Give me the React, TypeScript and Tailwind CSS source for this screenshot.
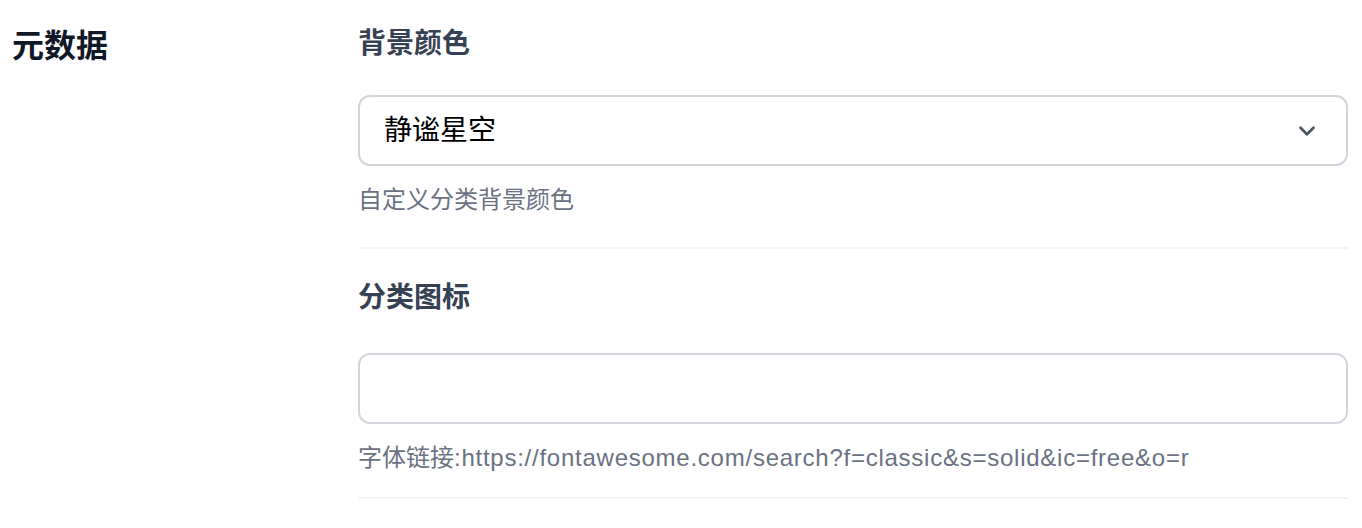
import { ChevronDown } from 'lucide-react';

const font = { fontFamily: '"Liberation Sans", "Noto Sans CJK SC", sans-serif' };

function Field({
  label,
  children,
  help,
  top,
  gap,
  bottom,
}: {
  label: string;
  children: React.ReactNode;
  help: React.ReactNode;
  top: string;
  gap: string;
  bottom: string;
}) {
  return (
    <div className={`flex flex-col ${top} border-b-2 border-gray-100`}>
      <div className="text-[28px] leading-[40px] font-semibold text-gray-700">{label}</div>
      <div className={gap}>{children}</div>
      <div className={`mt-[16px] ${bottom} text-[24px] leading-[36px] text-gray-500`}>{help}</div>
    </div>
  );
}

export default function App() {
  return (
    <div className="flex min-h-[528px] w-full bg-white text-gray-900" style={font}>
      <div className="w-[358px] shrink-0 pl-3 pt-[26px]">
        <h2 className="text-[32px] leading-[40px] font-semibold text-gray-900">元数据</h2>
      </div>
      <div className="flex flex-1 flex-col pr-[14px]">
        <Field label="背景颜色" help="自定义分类背景颜色" top="pt-6" gap="mt-[31px]" bottom="mb-[29px]">
          <button
            type="button"
            className="flex h-[71px] w-full items-center justify-between rounded-xl border-2 border-gray-300 bg-white pl-[24px] pr-[26px] text-left"
          >
            <span className="text-[28px] text-black">静谧星空</span>
            <ChevronDown className="h-[26px] w-[26px] text-gray-600" strokeWidth={2.5} />
          </button>
        </Field>
        <Field
          label="分类图标"
          help={
            <>
              字体链接
              <span className="tracking-[0.75px]">:https://fontawesome.com/search?f=classic&s=solid&ic=free&o=r</span>
            </>
          }
          top="pt-[29px]"
          gap="mt-[35px]"
          bottom="mb-[21px]"
        >
          <input
            type="text"
            className="block h-[71px] w-full rounded-xl border-2 border-gray-300 bg-white px-6 text-[28px] outline-none"
          />
        </Field>
      </div>
    </div>
  );
}
